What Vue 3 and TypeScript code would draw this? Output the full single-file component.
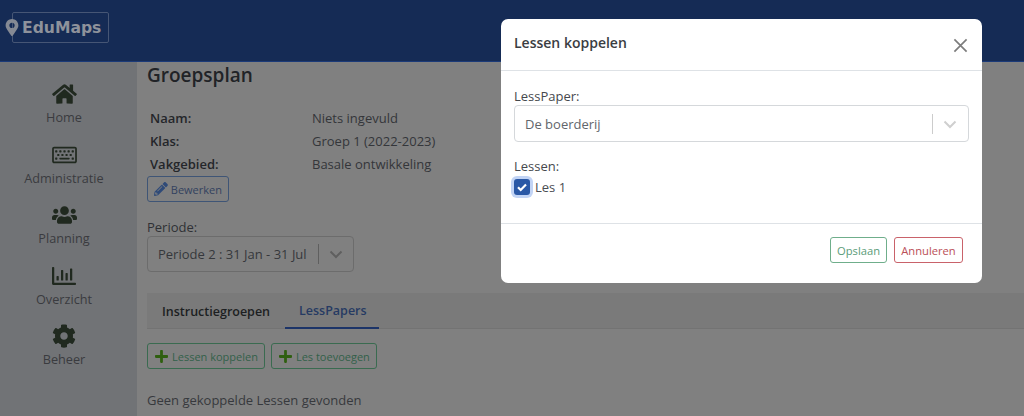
<script setup lang="ts">
interface NavItem { label: string; box: string; w: number; h: number; d: string }
const nav: NavItem[] = [
  { label: 'Home', box: '0 0 576 512', w: 25, h: 22, d: 'M280.37 148.26L96 300.11V464a16 16 0 0 0 16 16l112.06-.29a16 16 0 0 0 15.92-16V368a16 16 0 0 1 16-16h64a16 16 0 0 1 16 16v95.64a16 16 0 0 0 16 16.05L464 480a16 16 0 0 0 16-16V300L295.67 148.26a12.19 12.19 0 0 0-15.3 0zM571.6 251.47L488 182.56V44.05a12 12 0 0 0-12-12h-56a12 12 0 0 0-12 12v72.61L318.47 43a48 48 0 0 0-61 0L4.34 251.47a12 12 0 0 0-1.6 16.9l25.5 31A12 12 0 0 0 45.15 301l235.22-193.74a12.19 12.19 0 0 1 15.3 0L530.9 301a12 12 0 0 0 16.9-1.6l25.5-31a12 12 0 0 0-1.7-16.93z' },
  { label: 'Administratie', box: '0 0 576 512', w: 25, h: 22, d: 'M528 64H48C21.49 64 0 85.49 0 112v288c0 26.51 21.49 48 48 48h480c26.51 0 48-21.49 48-48V112c0-26.51-21.49-48-48-48zm8 336c0 4.411-3.589 8-8 8H48c-4.411 0-8-3.589-8-8V112c0-4.411 3.589-8 8-8h480c4.411 0 8 3.589 8 8v288zM170 270v-28c0-6.627-5.373-12-12-12h-28c-6.627 0-12 5.373-12 12v28c0 6.627 5.373 12 12 12h28c6.627 0 12-5.373 12-12zm96 0v-28c0-6.627-5.373-12-12-12h-28c-6.627 0-12 5.373-12 12v28c0 6.627 5.373 12 12 12h28c6.627 0 12-5.373 12-12zm96 0v-28c0-6.627-5.373-12-12-12h-28c-6.627 0-12 5.373-12 12v28c0 6.627 5.373 12 12 12h28c6.627 0 12-5.373 12-12zm96 0v-28c0-6.627-5.373-12-12-12h-28c-6.627 0-12 5.373-12 12v28c0 6.627 5.373 12 12 12h28c6.627 0 12-5.373 12-12zm-336 82v-28c0-6.627-5.373-12-12-12H82c-6.627 0-12 5.373-12 12v28c0 6.627 5.373 12 12 12h28c6.627 0 12-5.373 12-12zm384 0v-28c0-6.627-5.373-12-12-12h-28c-6.627 0-12 5.373-12 12v28c0 6.627 5.373 12 12 12h28c6.627 0 12-5.373 12-12zM122 188v-28c0-6.627-5.373-12-12-12H82c-6.627 0-12 5.373-12 12v28c0 6.627 5.373 12 12 12h28c6.627 0 12-5.373 12-12zm96 0v-28c0-6.627-5.373-12-12-12h-28c-6.627 0-12 5.373-12 12v28c0 6.627 5.373 12 12 12h28c6.627 0 12-5.373 12-12zm96 0v-28c0-6.627-5.373-12-12-12h-28c-6.627 0-12 5.373-12 12v28c0 6.627 5.373 12 12 12h28c6.627 0 12-5.373 12-12zm96 0v-28c0-6.627-5.373-12-12-12h-28c-6.627 0-12 5.373-12 12v28c0 6.627 5.373 12 12 12h28c6.627 0 12-5.373 12-12zm96 0v-28c0-6.627-5.373-12-12-12h-28c-6.627 0-12 5.373-12 12v28c0 6.627 5.373 12 12 12h28c6.627 0 12-5.373 12-12zm-98 158v-16c0-6.627-5.373-12-12-12H180c-6.627 0-12 5.373-12 12v16c0 6.627 5.373 12 12 12h216c6.627 0 12-5.373 12-12z' },
  { label: 'Planning', box: '0 0 640 512', w: 25, h: 20, d: 'M96 224c35.3 0 64-28.7 64-64s-28.7-64-64-64-64 28.7-64 64 28.7 64 64 64zm448 0c35.3 0 64-28.7 64-64s-28.7-64-64-64-64 28.7-64 64 28.7 64 64 64zm32 32h-64c-17.6 0-33.5 7.1-45.1 18.6 40.3 22.1 68.9 62 75.1 109.4h66c17.7 0 32-14.3 32-32v-32c0-35.3-28.7-64-64-64zm-256 0c61.9 0 112-50.1 112-112S381.9 32 320 32 208 82.1 208 144s50.1 112 112 112zm76.8 32h-8.3c-20.8 10-43.9 16-68.5 16s-47.6-6-68.5-16h-8.3C179.6 288 128 339.6 128 403.2V432c0 26.5 21.5 48 48 48h288c26.5 0 48-21.5 48-48v-28.8c0-63.6-51.6-115.2-115.2-115.2zm-223.7-13.4C161.5 263.1 145.6 256 128 256H64c-35.3 0-64 28.7-64 64v32c0 17.7 14.3 32 32 32h65.9c6.3-47.4 34.9-87.3 75.2-109.4z' },
  { label: 'Overzicht', box: '0 0 512 512', w: 24, h: 24, d: 'M396.8 352h22.4c6.4 0 12.8-6.4 12.8-12.8V108.8c0-6.4-6.4-12.8-12.8-12.8h-22.4c-6.4 0-12.8 6.4-12.8 12.8v230.4c0 6.4 6.4 12.8 12.8 12.8zm-192 0h22.4c6.4 0 12.8-6.4 12.8-12.8V140.8c0-6.4-6.4-12.8-12.8-12.8h-22.4c-6.4 0-12.8 6.4-12.8 12.8v198.4c0 6.4 6.4 12.8 12.8 12.8zm96 0h22.4c6.4 0 12.8-6.4 12.8-12.8V204.8c0-6.4-6.4-12.8-12.8-12.8h-22.4c-6.4 0-12.8 6.4-12.8 12.8v134.4c0 6.4 6.4 12.8 12.8 12.8zM496 400H48V80c0-8.84-7.16-16-16-16H16C7.16 64 0 71.16 0 80v336c0 17.67 14.33 32 32 32h464c8.84 0 16-7.16 16-16v-16c0-8.84-7.16-16-16-16zm-387.2-48h22.4c6.4 0 12.8-6.4 12.8-12.8v-70.4c0-6.4-6.4-12.8-12.8-12.8h-22.4c-6.4 0-12.8 6.4-12.8 12.8v70.4c0 6.4 6.4 12.8 12.8 12.8z' },
  { label: 'Beheer', box: '0 0 512 512', w: 24, h: 24, d: 'M487.4 315.7l-42.6-24.6c4.3-23.2 4.3-47 0-70.2l42.6-24.6c4.9-2.8 7.1-8.6 5.5-14-11.1-35.6-30-67.8-54.7-94.6-3.8-4.1-10-5.1-14.8-2.3L380.8 110c-17.9-15.4-38.5-27.3-60.8-35.1V25.8c0-5.6-3.9-10.5-9.4-11.7-36.7-8.2-74.3-7.8-109.2 0-5.5 1.2-9.4 6.1-9.4 11.7V75c-22.2 7.9-42.8 19.8-60.8 35.1L88.7 85.5c-4.9-2.8-11-1.9-14.8 2.3-24.7 26.7-43.6 58.9-54.7 94.6-1.7 5.4.6 11.2 5.5 14L67.3 221c-4.3 23.2-4.3 47 0 70.2l-42.6 24.6c-4.9 2.8-7.1 8.6-5.5 14 11.1 35.6 30 67.8 54.7 94.6 3.8 4.1 10 5.1 14.8 2.3l42.6-24.6c17.9 15.4 38.5 27.3 60.8 35.1v49.2c0 5.6 3.9 10.5 9.4 11.7 36.7 8.2 74.3 7.8 109.2 0 5.5-1.2 9.4-6.1 9.4-11.7v-49.2c22.2-7.9 42.8-19.8 60.8-35.1l42.6 24.6c4.9 2.8 11 1.9 14.8-2.3 24.7-26.7 43.6-58.9 54.7-94.6 1.5-5.5-.7-11.3-5.6-14.1zM256 336c-44.1 0-80-35.9-80-80s35.9-80 80-80 80 35.9 80 80-35.9 80-80 80z' }
]
const info = [
  ['Naam:', 'Niets ingevuld'],
  ['Klas:', 'Groep 1 (2022-2023)'],
  ['Vakgebied:', 'Basale ontwikkeling']
]
const marker = 'M172.268 501.67C26.97 291.031 0 255.06 0 192 0 85.961 85.961 0 192 0s192 85.961 192 192c0 63.06-26.97 99.031-172.268 309.67-9.535 13.774-29.93 13.773-39.464 0zM192 272c44.183 0 80-35.817 80-80s-35.817-80-80-80-80 35.817-80 80 35.817 80 80 80z'
const pencil = 'M497.9 142.1l-46.1 46.1c-4.7 4.7-12.3 4.7-17 0l-111-111c-4.7-4.7-4.7-12.3 0-17l46.1-46.1c18.7-18.7 49.1-18.7 67.9 0l60.1 60.1c18.8 18.7 18.8 49.1 0 67.9zM284.2 99.8L21.6 362.4.4 483.9c-2.9 16.4 11.4 30.6 27.8 27.8l121.5-21.3 262.6-262.6c4.7-4.7 4.7-12.3 0-17l-111-111c-4.8-4.7-12.4-4.7-17.1 0zM124.1 339.9c-5.5-5.5-5.5-14.3 0-19.8l154-154c5.5-5.5 14.3-5.5 19.8 0s5.5 14.3 0 19.8l-154 154c-5.5 5.5-14.3 5.5-19.8 0zM88 424h48v36.3l-64.5 11.3-31.1-31.1L51.7 376H88v48z'
const plus = 'M416 208H272V64c0-17.67-14.33-32-32-32h-32c-17.67 0-32 14.33-32 32v144H32c-17.67 0-32 14.33-32 32v32c0 17.67 14.33 32 32 32h144v144c0 17.67 14.33 32 32 32h32c17.67 0 32-14.33 32-32V304h144c17.67 0 32-14.33 32-32v-32c0-17.67-14.33-32-32-32z'
</script>

<template>
  <div class="page">
    <header class="topbar">
      <div class="logo">
        <svg class="marker" viewBox="0 0 384 512"><path :d="marker" /></svg>
        <span class="logo-text">EduMaps</span>
      </div>
    </header>
    <div class="below">
      <nav class="sidebar">
        <a v-for="item in nav" :key="item.label" class="nav-item">
          <span class="nav-icon">
            <svg :viewBox="item.box" :width="item.w" :height="item.h"><path :d="item.d" /></svg>
          </span>
          <span class="nav-label">{{ item.label }}</span>
        </a>
      </nav>
      <main class="main">
        <h1 class="title">Groepsplan</h1>
        <div class="info">
          <template v-for="row in info" :key="row[0]">
            <span class="info-key">{{ row[0] }}</span>
            <span class="info-val">{{ row[1] }}</span>
          </template>
        </div>
        <button class="btn btn-edit">
          <svg viewBox="0 0 512 512" width="14" height="14"><path :d="pencil" /></svg>
          Bewerken
        </button>
        <label class="periode-label">Periode:</label>
        <div class="select periode">
          <span class="select-value">Periode 2 : 31 Jan - 31 Jul</span>
          <span class="select-sep"></span>
          <svg class="chev" viewBox="0 0 20 20" width="20" height="20"><path d="M4.5 7.5 10 13l5.5-5.5" /></svg>
        </div>
        <div class="tabs">
          <span class="tab tab-plain">Instructiegroepen</span>
          <span class="tab tab-active">LessPapers</span>
        </div>
        <div class="actions">
          <button class="btn btn-add">
            <svg viewBox="0 0 448 512" width="13" height="15"><path :d="plus" /></svg>
            Lessen koppelen
          </button>
          <button class="btn btn-add">
            <svg viewBox="0 0 448 512" width="13" height="15"><path :d="plus" /></svg>
            Les toevoegen
          </button>
        </div>
        <p class="empty">Geen gekoppelde Lessen gevonden</p>
      </main>
    </div>

    <section class="modal">
      <div class="modal-head">
        <h2 class="modal-title">Lessen koppelen</h2>
        <svg class="close" viewBox="0 0 16 16" width="15" height="15"><path d="M1.5 1.5l13 13M14.5 1.5l-13 13" /></svg>
      </div>
      <div class="modal-body">
        <label class="field-label">LessPaper:</label>
        <div class="select modal-select">
          <span class="select-value">De boerderij</span>
          <span class="select-sep light"></span>
          <svg class="chev light" viewBox="0 0 20 20" width="20" height="20"><path d="M4.5 7.5 10 13l5.5-5.5" /></svg>
        </div>
        <label class="field-label lessen">Lessen:</label>
        <div class="check-row">
          <span class="checkbox">
            <svg viewBox="0 0 16 16" width="16" height="16"><path d="M4 8.3l2.7 2.7L12 5.6" /></svg>
          </span>
          <span>Les 1</span>
        </div>
      </div>
      <div class="modal-foot">
        <button class="btn btn-save">Opslaan</button>
        <button class="btn btn-cancel">Annuleren</button>
      </div>
    </section>
  </div>
</template>

<style>
html, body { margin: 0; padding: 0; overflow: hidden; background: #808080; }
</style>

<style scoped>
.page {
  position: relative;
  width: 1024px;
  height: 416px;
  overflow: hidden;
  background: #808080;
  color: #3a3c40;
  font-family: "Open Sans", "Noto Sans", sans-serif;
  font-size: 13px;
}
.topbar {
  height: 62px;
  box-sizing: border-box;
  background: #152b55;
  padding: 12px 0 0 12px;
  border-bottom: 1px solid #1b3a78;
  display: flex;
  align-items: flex-start;
}
.logo {
  width: 97px;
  height: 31px;
  box-sizing: border-box;
  border: 1px solid #465675;
  border-radius: 2px;
  position: relative;
  display: flex;
  align-items: center;
  padding-left: 9px;
}
.marker {
  position: absolute;
  left: -8px;
  top: 6px;
  width: 14px;
  height: 17px;
  fill: #858a94;
}
.logo-text {
  font-family: "DejaVu Sans", sans-serif;
  font-weight: 700;
  font-size: 15.6px;
  color: #8e929b;
}
.below { display: flex; height: 354px; }
.sidebar {
  width: 137px;
  flex: none;
  background: #717376;
  padding-top: 18px;
  box-sizing: border-box;
}
.nav-item {
  height: 60.5px;
  display: flex;
  flex-direction: column;
  align-items: center;
  padding-right: 9px;
}
.nav-icon {
  height: 28px;
  display: flex;
  align-items: center;
  justify-content: center;
}
.nav-icon svg { fill: #20291f; display: block; }
.nav-label { font-size: 12.7px; line-height: 18px; color: #3a3b3f; }
.main { flex: 1; padding: 0 0 0 10px; min-width: 0; }
.title {
  margin: 0;
  font-size: 19px;
  font-weight: 600;
  line-height: 26px;
  color: #212327;
}
.info {
  margin-top: 18px;
  padding-left: 3px;
  display: grid;
  grid-template-columns: 162px 1fr;
  grid-auto-rows: 23px;
  align-items: center;
  font-size: 13px;
}
.info-key { font-weight: 600; color: #24262a; }
.info-val { color: #34363a; }
.btn {
  box-sizing: border-box;
  height: 26px;
  padding: 0 6px 0 7px;
  background: transparent;
  border: 1px solid;
  border-radius: 3px;
  font-family: inherit;
  font-size: 11px;
  display: inline-flex;
  align-items: center;
  gap: 4px;
}
.btn-edit {
  width: 82px;
  height: 26px;
  margin-top: 1px;
  display: flex;
  padding: 0 6px;
  gap: 3px;
  border-color: #3f5576;
  color: #33425f;
}
.btn-edit svg { fill: #2f4a78; }
.periode-label { display: block; margin-top: 16px; line-height: 18px; color: #2f3135; }
.select {
  box-sizing: border-box;
  display: flex;
  align-items: center;
  border: 1px solid #6c6c6c;
  border-radius: 4px;
}
.periode { width: 207px; height: 36px; padding-left: 10px; color: #36383c; }
.select-value { flex: 1; white-space: nowrap; }
.select-sep { width: 1px; height: 20px; background: #5f5f5f; margin-right: 7px; }
.chev { fill: none; stroke: #5f5f5f; stroke-width: 2; margin-right: 7px; }
.tabs {
  margin-top: 21px;
  height: 36px;
  box-sizing: border-box;
  background: #7a7a7a;
  border-bottom: 1px solid #737373;
  display: flex;
}
.tab {
  height: 36px;
  box-sizing: border-box;
  display: flex;
  align-items: center;
  font-weight: 600;
  font-size: 12.5px;
}
.tab-plain { color: #1d1f22; padding: 0 15px; width: 138px; }
.tab-active { color: #263a63; border-bottom: 2px solid #1c3468; padding: 0 14px; width: 94px; }
.actions { margin-top: 14px; display: flex; gap: 6px; }
.btn-add { border-color: #3a6b50; color: #33604a; }
.btn-add svg { fill: #2f5f10; }
.empty { margin: 22px 0 0; line-height: 18px; color: #37393d; }

.modal {
  position: absolute;
  left: 501px;
  top: 19px;
  width: 481px;
  height: 264px;
  background: #fff;
  border-radius: 7px;
  color: #4a4d52;
  display: flex;
  flex-direction: column;
}
.modal-head {
  height: 52px;
  flex: none;
  box-sizing: border-box;
  border-bottom: 1px solid #dee2e6;
  display: flex;
  align-items: center;
  justify-content: space-between;
  padding: 0 14px 0 13px;
}
.modal-title { margin: 0 0 4px; font-size: 14px; font-weight: 600; color: #3a3d42; }
.close { fill: none; stroke: #7c7c7c; stroke-width: 1.8; margin-top: 1px; }
.modal-body { padding: 16px 13px 0; flex: 1; }
.field-label { display: block; line-height: 18px; color: #45484d; }
.modal-select { height: 37px; border-color: #d5d8db; padding-left: 10px; color: #62666b; }
.select-sep.light { background: #cccccc; }
.chev.light { stroke: #cfcfcf; margin-right: 8px; }
.lessen { margin-top: 15px; }
.check-row { display: flex; align-items: center; gap: 5px; height: 18px; margin-top: 3px; }
.checkbox {
  width: 16px;
  height: 16px;
  border-radius: 3px;
  background: #2a58a6;
  box-shadow: 0 0 0 3px #c2d4f5;
  display: block;
}
.checkbox svg { display: block; fill: none; stroke: #fff; stroke-width: 2.2; }
.modal-foot {
  height: 60px;
  flex: none;
  box-sizing: border-box;
  border-top: 1px solid #dee2e6;
  display: flex;
  justify-content: flex-end;
  align-items: flex-start;
  gap: 7px;
  padding: 13px 19px 0 0;
}
.btn-save { width: 57px; font-size: 11.2px; justify-content: center; border-color: #6fae8b; color: #5a9c78; padding: 0; }
.btn-cancel { width: 69px; font-size: 11.2px; justify-content: center; border-color: #c9626a; color: #bb4f58; padding: 0; }
</style>
